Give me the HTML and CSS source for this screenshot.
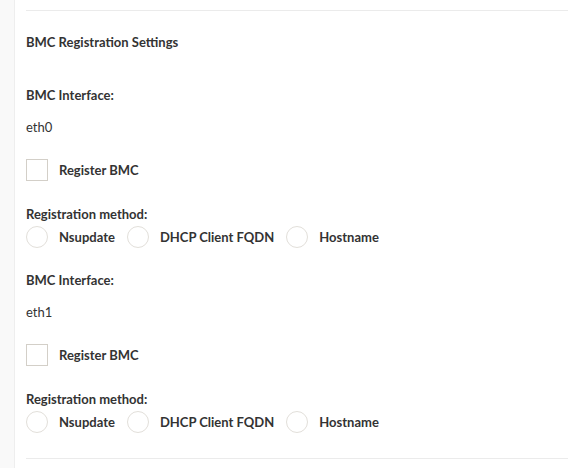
FILE: index.html
```html
<!DOCTYPE html>
<html>
<head>
<meta charset="utf-8">
<link rel="stylesheet" href="styles.css">
</head>
<body>
<div class="layout">
  <div class="sidebar"></div>
  <main class="main">
    <hr class="rule top">
    <h3 class="title">BMC Registration Settings</h3>
    <section class="iface">
      <div class="label">BMC Interface:</div>
      <div class="value">eth0</div>
      <label class="check"><span class="box"></span><span>Register BMC</span></label>
      <div class="label method">Registration method:</div>
      <div class="radios">
        <label class="radio"><span class="circle"></span><span>Nsupdate</span></label>
        <label class="radio"><span class="circle"></span><span>DHCP Client FQDN</span></label>
        <label class="radio"><span class="circle"></span><span>Hostname</span></label>
      </div>
    </section>
    <section class="iface">
      <div class="label">BMC Interface:</div>
      <div class="value">eth1</div>
      <label class="check"><span class="box"></span><span>Register BMC</span></label>
      <div class="label method">Registration method:</div>
      <div class="radios">
        <label class="radio"><span class="circle"></span><span>Nsupdate</span></label>
        <label class="radio"><span class="circle"></span><span>DHCP Client FQDN</span></label>
        <label class="radio"><span class="circle"></span><span>Hostname</span></label>
      </div>
    </section>
    <hr class="rule bottom">
  </main>
</div>
</body>
</html>
```
FILE: styles.css
```css
html, body {
  margin: 0;
  padding: 0;
  background: #fff;
}
body {
  font-family: "Lato", "Open Sans", sans-serif;
  font-size: 13px;
  color: #333;
}
.layout {
  display: flex;
  min-height: 468px;
}
.sidebar {
  width: 14px;
  background: #f9f9f9;
  border-right: 1px solid #eeeeee;
  flex: none;
}
.main {
  flex: 1;
  padding-left: 11px;
}
.rule {
  border: 0;
  border-top: 1px solid #ebebeb;
  margin: 0;
}
.rule.top {
  margin-top: 10px;
}
.title {
  margin: 0;
  font-size: 13px;
  font-weight: 700;
  line-height: 18px;
  padding-top: 22px;
}
.iface {
  display: flex;
  flex-direction: column;
  align-items: flex-start;
}
.label {
  font-weight: 700;
  line-height: 18px;
  margin-top: 35px;
}
.iface + .iface .label:first-child {
  margin-top: 23px;
}
.label.method {
  margin-top: 24px;
}
.value {
  line-height: 18px;
  margin-top: 14px;
}
.check {
  display: flex;
  align-items: center;
  gap: 11px;
  font-weight: 700;
  margin-top: 23px;
}
.box {
  width: 20px;
  height: 20px;
  border: 1px solid #d3cfc8;
  background: #fff;
}
.radios {
  display: flex;
  align-items: center;
  gap: 12px;
  margin-top: 3px;
}
.radio {
  display: flex;
  align-items: center;
  gap: 11px;
  font-weight: 700;
}
.circle {
  width: 20px;
  height: 20px;
  border: 1px solid #e2dfda;
  border-radius: 50%;
  background: #fff;
}
.rule.bottom {
  margin-top: 25px;
}
```
